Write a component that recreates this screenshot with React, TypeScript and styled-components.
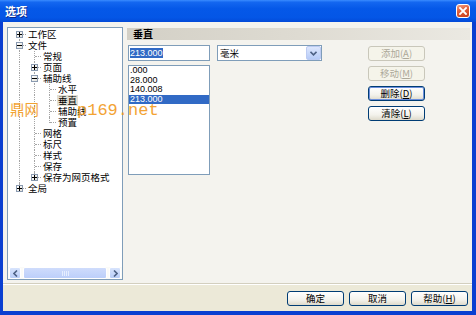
import * as React from 'react'
import styled, { createGlobalStyle, css } from 'styled-components'

const cjk = `"Noto Sans CJK SC", "Noto Sans", sans-serif`
const sans = `"Liberation Sans", "Noto Sans CJK SC", sans-serif`

const GlobalStyle = createGlobalStyle`
  html, body {
    margin: 0;
    padding: 0;
    background: #ffffff;
    overflow: hidden;
  }
`

type TreeItem = { level: number; text: string; box?: '+' | '-'; selected?: boolean }

const tree: TreeItem[] = [
  { level: 0, text: '工作区', box: '+' },
  { level: 0, text: '文件', box: '-' },
  { level: 1, text: '常规' },
  { level: 1, text: '页面', box: '+' },
  { level: 1, text: '辅助线', box: '-' },
  { level: 2, text: '水平' },
  { level: 2, text: '垂直', selected: true },
  { level: 2, text: '辅助线' },
  { level: 2, text: '预置' },
  { level: 1, text: '网格' },
  { level: 1, text: '标尺' },
  { level: 1, text: '样式' },
  { level: 1, text: '保存' },
  { level: 1, text: '保存为网页格式', box: '+' },
  { level: 0, text: '全局', box: '+' },
]

const values = ['.000', '28.000', '140.008', '213.000']

const hasNext = (i: number) => {
  const l = tree[i].level
  for (let j = i + 1; j < tree.length; j++) {
    if (tree[j].level < l) return false
    if (tree[j].level === l) return true
  }
  return false
}

const ancestorAt = (i: number, k: number) => {
  for (let j = i - 1; j >= 0; j--) if (tree[j].level === k) return j
  return -1
}

const App = () => {
  return (
    <>
      <GlobalStyle />
      <Window>
        <TitleBar>
          <Title>选项</Title>
          <CloseButton>
            <svg width="8" height="8" viewBox="0 0 8 8">
              <path d="M1 1L7 7M7 1L1 7" stroke="#ffffff" strokeWidth="1.8" strokeLinecap="square" />
            </svg>
          </CloseButton>
        </TitleBar>
        <Client>
          <Main>
            <TreeBox>
              <TreeRows>
                {tree.map((item, i) => (
                  <TreeRow key={i}>
                    {Array.from({ length: item.level }).map((_, k) => {
                      const a = ancestorAt(i, k)
                      const cont = a >= 0 && hasNext(a)
                      return <Guide key={k} $up={cont} $down={cont} />
                    })}
                    <Guide $up={i !== 0} $down={hasNext(i)} $across>
                      {item.box && (
                        <Expander>
                          <svg width="5" height="5" viewBox="0 0 5 5">
                            <path d="M0 2.5H5" stroke="#000" strokeWidth="1" />
                            {item.box === '+' && <path d="M2.5 0V5" stroke="#000" strokeWidth="1" />}
                          </svg>
                        </Expander>
                      )}
                    </Guide>
                    <TreeLabel $selected={item.selected}>{item.text}</TreeLabel>
                  </TreeRow>
                ))}
              </TreeRows>
              <HScroll>
                <ScrollButton>
                  <svg width="5" height="7" viewBox="0 0 5 7">
                    <path d="M4 0.5L1 3.5L4 6.5" stroke="#4d6185" strokeWidth="1.6" fill="none" />
                  </svg>
                </ScrollButton>
                <ScrollThumb>
                  <Grip />
                </ScrollThumb>
                <ScrollButton>
                  <svg width="5" height="7" viewBox="0 0 5 7">
                    <path d="M1 0.5L4 3.5L1 6.5" stroke="#4d6185" strokeWidth="1.6" fill="none" />
                  </svg>
                </ScrollButton>
              </HScroll>
            </TreeBox>

            <Panel>
              <PanelHeader>垂直</PanelHeader>
              <PanelBody>
                <LeftCol>
                  <ValueInput>
                    <Selection>213.000</Selection>
                  </ValueInput>
                  <ListBox>
                    {values.map((v) => (
                      <ListItem key={v} $selected={v === '213.000'}>{v}</ListItem>
                    ))}
                  </ListBox>
                </LeftCol>
                <UnitSelect>
                  <span>毫米</span>
                  <DropButton>
                    <svg width="7" height="5" viewBox="0 0 7 5">
                      <path d="M0.5 0.8L3.5 3.8L6.5 0.8" stroke="#4d6185" strokeWidth="1.6" fill="none" />
                    </svg>
                  </DropButton>
                </UnitSelect>
                <ButtonCol>
                  <Button $kind="disabled">添加(<u>A</u>)</Button>
                  <Button $kind="disabled">移动(<u>M</u>)</Button>
                  <Button $kind="focus">删除(<u>D</u>)</Button>
                  <Button>清除(<u>L</u>)</Button>
                </ButtonCol>
              </PanelBody>
            </Panel>
          </Main>
          <Footer>
            <Button>确定</Button>
            <Button>取消</Button>
            <Button>帮助(<u>H</u>)</Button>
          </Footer>
        </Client>
        <Watermark>
          <span className="wm__cn">鼎网</span>
          <span className="wm__url">p169.net</span>
        </Watermark>
      </Window>
    </>
  )
}
export default App

const Window = styled.div`
  position: relative;
  width: 476px;
  height: 315px;
  overflow: hidden;
  display: flex;
  flex-direction: column;
  background: #0a3fd1;
`

const TitleBar = styled.div`
  height: 22px;
  flex-shrink: 0;
  display: flex;
  align-items: center;
  justify-content: space-between;
  padding: 0 6px 0 5px;
  box-sizing: border-box;
  background: linear-gradient(
    180deg,
    #3a8cff 0%,
    #1467f0 10%,
    #0558e8 40%,
    #0456e6 80%,
    #034ad8 100%
  );
`

const Title = styled.div`
  color: #ffffff;
  font-family: ${cjk};
  font-weight: 700;
  font-size: 11px;
  line-height: 12px;
  text-shadow: 1px 1px 0 #0a2a8a;
`

const CloseButton = styled.div`
  width: 14px;
  height: 14px;
  box-sizing: border-box;
  border: 1px solid #ffffff;
  border-radius: 3px;
  display: flex;
  align-items: center;
  justify-content: center;
  background: linear-gradient(160deg, #f0a28a 0%, #e2623c 40%, #c83c18 100%);
`

const Client = styled.div`
  flex: 1;
  display: flex;
  flex-direction: column;
  margin: 0 4px 4px 3px;
  background: #ece9d8;
`

const Main = styled.div`
  height: 262px;
  box-sizing: border-box;
  display: flex;
  gap: 4px;
  padding: 5px 2px 4px 4px;
  background: #f4f3ee;
  border-bottom: 1px solid #d3cfbf;
  box-shadow: 0 1px 0 #ffffff;
`

const TreeBox = styled.div`
  width: 116px;
  height: 253px;
  box-sizing: border-box;
  border: 1px solid #7f9db9;
  background: #ffffff;
  display: flex;
  flex-direction: column;
`

const TreeRows = styled.div`
  flex: 1;
  padding: 1px 0 0 4px;
  overflow: hidden;
`

const TreeRow = styled.div`
  display: flex;
  align-items: center;
  height: 11px;
`

const Guide = styled.div<{ $up?: boolean; $down?: boolean; $across?: boolean }>`
  position: relative;
  flex-shrink: 0;
  width: 15px;
  height: 11px;
  ${({ $up, $down }) =>
    ($up || $down) &&
    css`
      &::before {
        content: '';
        position: absolute;
        left: 7px;
        top: ${$up ? '0' : '5px'};
        bottom: ${$down ? '0' : '5px'};
        border-left: 1px dotted #a5a5a5;
      }
    `}
  ${({ $across }) =>
    $across &&
    css`
      &::after {
        content: '';
        position: absolute;
        left: 8px;
        right: 1px;
        top: 5px;
        border-top: 1px dotted #a5a5a5;
      }
    `}
`

const Expander = styled.div`
  position: absolute;
  z-index: 1;
  left: 4px;
  top: 2px;
  width: 7px;
  height: 7px;
  box-sizing: border-box;
  border: 1px solid #8a9ab0;
  background: linear-gradient(135deg, #ffffff 0%, #e4e3dc 100%);
  display: flex;
  align-items: center;
  justify-content: center;
  svg {
    display: block;
  }
`

const TreeLabel = styled.span<{ $selected?: boolean }>`
  font-family: ${cjk};
  font-size: 9.5px;
  line-height: 11px;
  height: 11px;
  color: #000000;
  padding: 0 1px;
  white-space: nowrap;
  background: ${({ $selected }) => ($selected ? '#e2dfd4' : 'transparent')};
`

const HScroll = styled.div`
  height: 12px;
  display: flex;
  align-items: stretch;
  gap: 1px;
  padding: 0 1px;
  background: #fbfbf8;
`

const ScrollButton = styled.div`
  width: 12px;
  box-sizing: border-box;
  border: 1px solid #ffffff;
  border-radius: 2px;
  background: linear-gradient(180deg, #d8e4fd 0%, #b8cdf8 100%);
  display: flex;
  align-items: center;
  justify-content: center;
`

const ScrollThumb = styled.div`
  flex: 1;
  margin: 0 1px;
  box-sizing: border-box;
  border: 1px solid #ffffff;
  border-radius: 2px;
  background: linear-gradient(180deg, #cfdcfc 0%, #bccffa 100%);
  display: flex;
  align-items: center;
  justify-content: center;
`

const Grip = styled.div`
  width: 7px;
  height: 5px;
  background: repeating-linear-gradient(
    90deg,
    #e6eeff 0px,
    #e6eeff 1px,
    transparent 1px,
    transparent 2px
  );
`

const Panel = styled.div`
  flex: 1;
  padding-top: 1px;
  display: flex;
  flex-direction: column;
`

const PanelHeader = styled.div`
  height: 12px;
  padding-left: 6px;
  font-family: ${cjk};
  font-weight: 700;
  font-size: 10px;
  line-height: 12px;
  color: #000000;
  background: linear-gradient(90deg, #d3d0c6 0%, #dedbd2 50%, #ebe9e2 100%);
`

const PanelBody = styled.div`
  display: flex;
  align-items: flex-start;
  padding: 5px 0 0 1px;
`

const LeftCol = styled.div`
  display: flex;
  flex-direction: column;
  gap: 4px;
  width: 82px;
`

const ValueInput = styled.div`
  height: 16px;
  box-sizing: border-box;
  border: 1px solid #7f9db9;
  background: #ffffff;
  display: flex;
  align-items: center;
  padding-left: 1px;
`

const Selection = styled.span`
  font-family: ${sans};
  font-size: 9px;
  line-height: 10px;
  color: #ffffff;
  background: #316ac5;
`

const ListBox = styled.div`
  height: 110px;
  box-sizing: border-box;
  border: 1px solid #7f9db9;
  background: #ffffff;
`

const ListItem = styled.div<{ $selected?: boolean }>`
  height: 9.5px;
  line-height: 9.5px;
  padding-left: 1px;
  font-family: ${sans};
  font-size: 9px;
  color: ${({ $selected }) => ($selected ? '#ffffff' : '#000000')};
  background: ${({ $selected }) => ($selected ? '#316ac5' : 'transparent')};
`

const UnitSelect = styled.div`
  width: 105px;
  height: 16px;
  margin-left: 7px;
  box-sizing: border-box;
  border: 1px solid #7f9db9;
  background: #ffffff;
  display: flex;
  align-items: center;
  justify-content: space-between;
  padding: 0 0 0 2px;
  font-family: ${cjk};
  font-size: 9.5px;
  color: #000000;
`

const DropButton = styled.div`
  width: 15px;
  height: 14px;
  box-sizing: border-box;
  border: 1px solid #bccbf2;
  border-radius: 2px;
  background: linear-gradient(180deg, #dde7fd 0%, #b6cbf7 100%);
  display: flex;
  align-items: center;
  justify-content: center;
`

const ButtonCol = styled.div`
  display: flex;
  flex-direction: column;
  gap: 5px;
  margin-left: 46px;
  padding-top: 1px;
`

const Button = styled.div<{ $kind?: 'normal' | 'focus' | 'disabled' }>`
  width: 57px;
  height: 15px;
  box-sizing: border-box;
  border-radius: 3px;
  display: flex;
  align-items: center;
  justify-content: center;
  font-family: ${cjk};
  font-size: 9.5px;
  line-height: 11px;
  border: 1px solid #003c74;
  color: #000000;
  background: linear-gradient(180deg, #ffffff 0%, #f3f2ec 60%, #dedacb 100%);
  u {
    text-underline-offset: 1px;
  }
  ${({ $kind }) =>
    $kind === 'disabled' &&
    css`
      border-color: #c9c7ba;
      color: #aca899;
      background: #f5f4ea;
    `}
  ${({ $kind }) =>
    $kind === 'focus' &&
    css`
      box-shadow: inset 0 0 0 1px #6d8fdc;
    `}
`

const Footer = styled.div`
  flex: 1;
  display: flex;
  justify-content: flex-end;
  align-items: flex-start;
  gap: 5px;
  padding: 6px 4px 0 0;
  margin-top: 1px;
  background: #ece9d8;
`

const Watermark = styled.div`
  position: absolute;
  z-index: 2;
  left: 10px;
  top: 100px;
  display: flex;
  align-items: baseline;
  pointer-events: none;
  color: #f29a1c;
  opacity: 0.9;
  .wm__cn {
    font-family: ${cjk};
    font-size: 14.5px;
    line-height: 18px;
  }
  .wm__url {
    margin-left: 38px;
    font-family: "Liberation Mono", monospace;
    font-size: 17px;
    line-height: 18px;
  }
`
